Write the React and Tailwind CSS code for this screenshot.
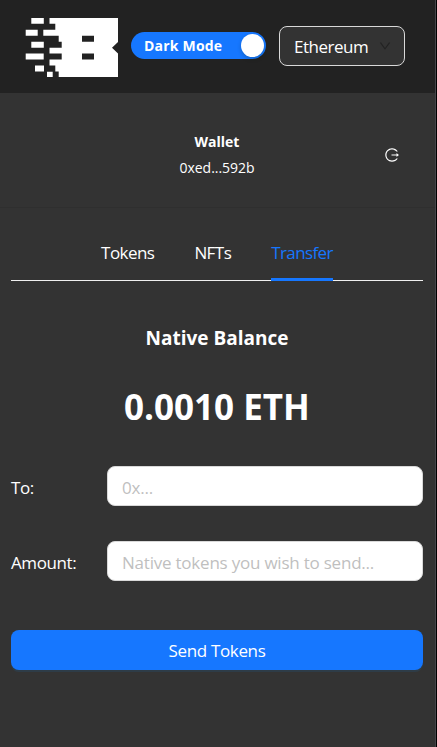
import { useState } from 'react';
import { AiOutlineDown, AiOutlineLogout } from 'react-icons/ai';

const Logo = () => (
  <svg className="w-[93px] h-[59px] shrink-0" viewBox="0 0 93 59" fill="white">
    {/* Loose pixels on the left */}
    <path d="M6.3 0h12.5v5.7H6.3z M.7 11.8h12v6h-12z M6.3 23.8h12.5v6H6.3z M.7 35.5h18v6H.7z M10 47.5h9v6h-9z M22 53.7h5.7V59H22z" />
    {/* Body with the two eyes cut out */}
    <path
      fillRule="evenodd"
      d="M24.5 0H93V24L87 29.8L93 35.5V59H33.7V53.5H30.3V47.5H24.5V41.5H36.7V35.5H24.5V29.7H36.7V23.8H33.7V17.8H18.3V11.8H30.3V5.8H24.5Z M57 17.8h12v6H57z M57 35.5h12v6H57z"
    />
  </svg>
);

const Header = ({ dark, onToggle }) => {
  return (
    <header className="flex h-[93px] pl-[25px] bg-[#222222]">
      <div className="mt-[18px]">
        <Logo />
      </div>
      <button
        onClick={onToggle}
        className="mt-8 ml-[13px] flex h-[27px] w-[135px] shrink-0 items-center justify-between rounded-full bg-[#1677ff] pl-[13px] pr-[2px]"
      >
        <span className="text-[14px] font-bold tracking-[0.2px] text-white whitespace-nowrap">{dark ? 'Dark Mode' : 'Light Mode'}</span>
        <span className="size-[23px] rounded-full bg-white shadow-[0_2px_4px_rgba(0,35,11,0.2)]"></span>
      </button>
      <button className="mt-[26px] ml-[13px] flex h-10 w-[126px] shrink-0 items-center justify-between rounded-lg border border-[#d9d9d9] bg-[#333333] pl-[14px] pr-[12px]">
        <span className="pt-[2px] text-[17px] tracking-[-0.5px] text-white">Ethereum</span>
        <AiOutlineDown className="size-3.5 text-[#222222]" />
      </button>
    </header>
  );
};

const WalletInfo = () => {
  return (
    <section className="grid h-[115px] grid-cols-[1fr_auto_1fr] border-b border-[#2f2f2f] pt-[36px] pr-[1px]">
      <div></div>
      <div className="text-center text-[14px] leading-[26px] text-white">
        <p className="font-bold">Wallet</p>
        <p className="tracking-[-0.05px]">0xed...592b</p>
      </div>
      <button className="mt-[18px] mr-[34px] size-4 justify-self-end">
        <AiOutlineLogout className="size-4 text-white" />
      </button>
    </section>
  );
};

const tabs = ['Tokens', 'NFTs', 'Transfer'];

const Tabs = ({ active, onChange }) => {
  return (
    <nav className="ml-[11px] mr-[12px] flex h-[73px] items-end justify-center gap-10 border-b border-[#f0f0f0]">
      {tabs.map((tab) => (
        <button
          key={tab}
          onClick={() => onChange(tab)}
          className={
            tab === active
              ? 'relative -mb-px h-[46px] border-b-3 border-[#1677ff] pb-[7px] text-[17px] tracking-[-0.6px] text-[#1677ff]'
              : 'h-[45px] pb-[10px] text-[17px] tracking-[-0.55px] text-white'
          }
        >
          {tab}
        </button>
      ))}
    </nav>
  );
};

const Field = ({ label, placeholder }) => {
  return (
    <label className="flex h-10 items-center text-[17px] text-white">
      <span className="w-24 shrink-0 pt-[3px] tracking-[-0.4px]">{label}</span>
      <input
        placeholder={placeholder}
        className="h-10 w-full min-w-0 rounded-lg border border-[#d9d9d9] bg-white px-[14px] pt-[3px] text-[17px] tracking-[-0.22px] text-black placeholder:text-[#bfbfbf]"
      />
    </label>
  );
};

const App = () => {
  const [dark, setDark] = useState(true);
  const [active, setActive] = useState('Transfer');

  return (
    <div className="flex h-[747px] w-[437px] bg-black font-['Open_Sans','Noto_Sans',sans-serif]">
      <div className="w-[436px] border-r border-[#45454a] bg-[#333333]">
        <Header dark={dark} onToggle={() => setDark(!dark)} />
        <WalletInfo />
        <Tabs active={active} onChange={setActive} />

        {/* Balance */}
        <div className="pr-[1px] text-center text-white">
          <h3 className="mt-[41px] text-[19px] leading-8 font-bold">Native Balance</h3>
          <h1 className="mt-[31px] text-[35px] leading-[44px] font-bold">0.0010 ETH</h1>
        </div>

        {/* Transfer form */}
        <form className="ml-[11px] mr-[12px] mt-[37px]">
          <Field label="To:" placeholder="0x..." />
          <div className="mt-[35px]">
            <Field label="Amount:" placeholder="Native tokens you wish to send..." />
          </div>
          <button
            type="button"
            className="mt-[49px] h-10 w-full rounded-lg bg-[#1677ff] pt-[2px] text-[17px] tracking-[-0.35px] text-white shadow-[0_2px_0_rgba(5,145,255,0.1)]"
          >
            Send Tokens
          </button>
        </form>
      </div>
    </div>
  );
};

export default App;
